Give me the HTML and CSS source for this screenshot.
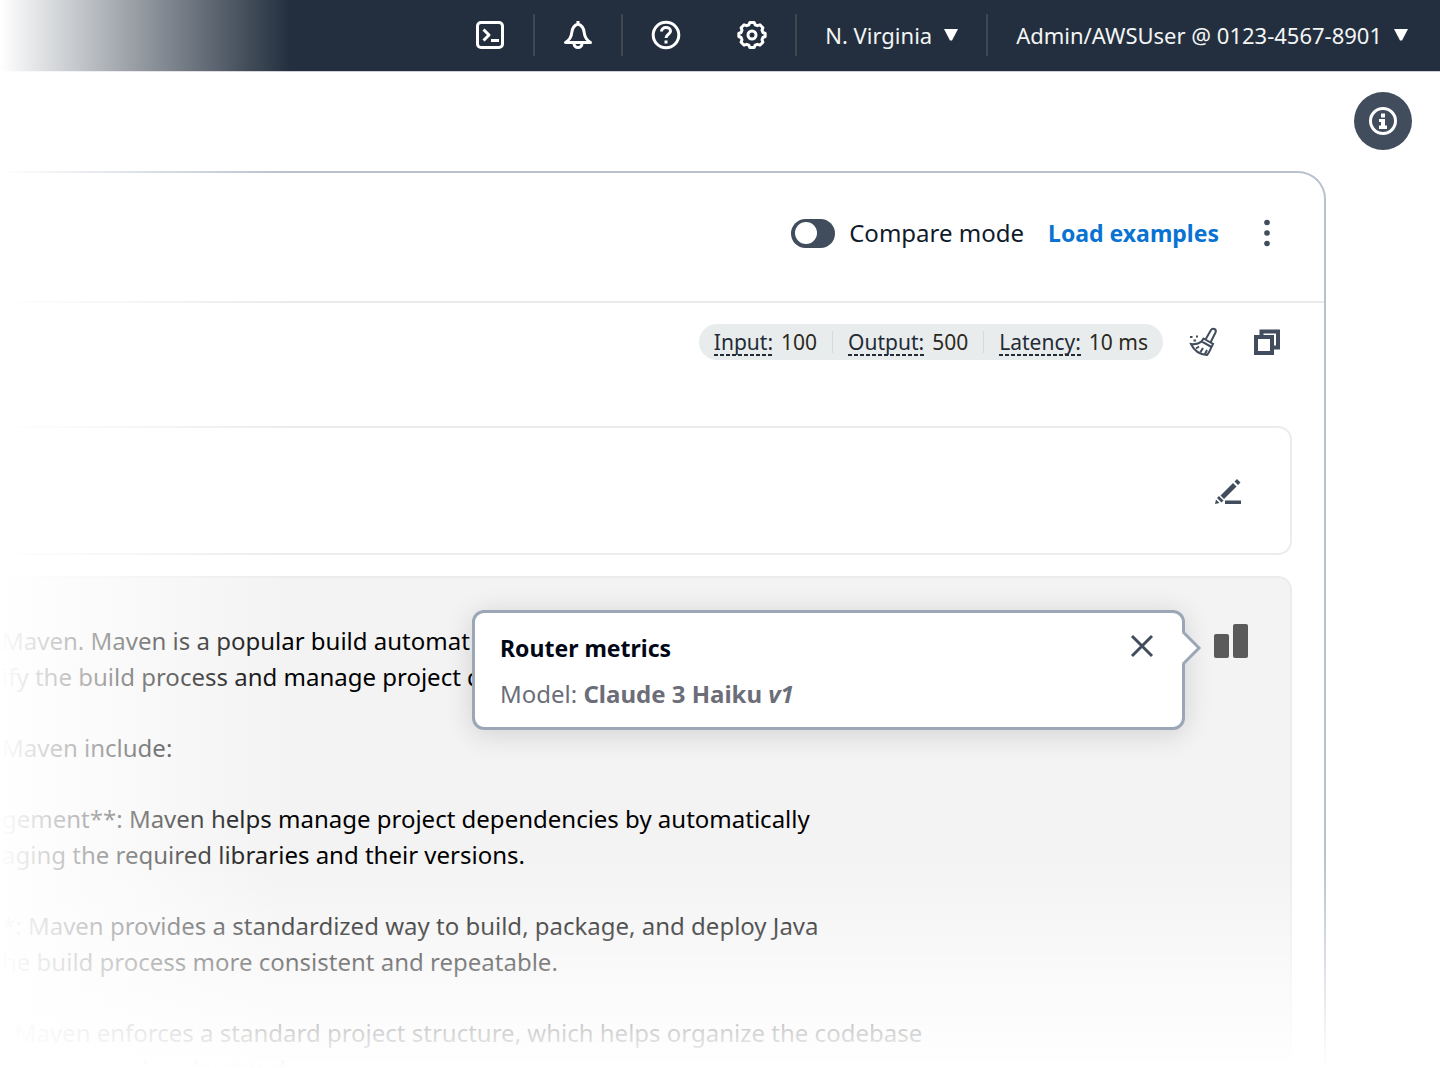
FILE: index.html
```html
<!DOCTYPE html>
<html lang="en">
<head>
<meta charset="utf-8">
<meta name="viewport" content="width=device-width, initial-scale=1">
<title>Router metrics</title>
<link rel="stylesheet" href="styles.css">
</head>
<body>
<div class="page">
  <header class="topbar">
    <nav class="topnav" aria-label="Account">
      <button class="nav-item" type="button" aria-label="CloudShell">
        <svg class="nav-icon" viewBox="0 0 30 30"><rect x="2.5" y="2.5" width="25" height="25" rx="3.5"/><path d="M8.500 9.500L14 15l-5.500 5.500M16 20.500h8"/></svg>
      </button>
      <button class="nav-item" type="button" aria-label="Notifications">
        <svg class="nav-icon" viewBox="0 0 30 30"><path d="M15 1v3M15 4c-4.500 1.500-6 5-6.300 9-.3 4-2.500 7-6.200 9.500h25c-3.700-2.500-5.900-5.500-6.200-9.500-.3-4-1.800-7.500-6.300-9zM11 23.500a4 4 0 0 0 8 0"/></svg>
      </button>
      <div class="nav-pair">
        <button class="nav-plain" type="button" aria-label="Help">
          <svg class="nav-icon" viewBox="0 0 30 30"><circle cx="15" cy="15" r="12.800"/><path d="M10.500 11.500c0-2.500 2-4 4.500-4s4.500 1.500 4.500 3.800c0 2.900-4.500 3.200-4.500 6.700M15 20.500v3"/></svg>
        </button>
        <button class="nav-plain" type="button" aria-label="Settings">
          <svg class="nav-icon" viewBox="0 0 30 30"><path d="M12.800 2.500h4.400l1 2.300 2.200.9 2.500-.9 3 3-.9 2.500.9 2.200 2.300 1v3l-2.300 1-.9 2.200.9 2.500-3 3-2.500-.9-2.200.9-1 2.300h-4.400l-1-2.300-2.200-.9-2.500.9-3-3 .9-2.500-.9-2.200-2.300-1v-3l2.300-1 .9-2.200-.9-2.500 3-3 2.500.9 2.200-.9z"/><circle cx="15" cy="15" r="4"/></svg>
        </button>
      </div>
      <button class="nav-item" type="button">N. Virginia <svg class="caret" viewBox="0 0 14 12"><path d="M0 0h14L8 11.500H6z"/></svg></button>
      <button class="nav-item" type="button">Admin/AWSUser @ 0123-4567-8901 <svg class="caret" viewBox="0 0 14 12"><path d="M0 0h14L8 11.500H6z"/></svg></button>
    </nav>
  </header>

  <div class="workspace">
    <main class="card">
      <div class="toolbar">
        <label class="toggle"><input type="checkbox"> Compare mode</label>
        <a class="load-link" href="#">Load examples</a>
        <button class="icon-button" type="button" aria-label="More actions">
          <svg viewBox="0 0 32 32"><circle cx="16" cy="5.500" r="2.800"/><circle cx="16" cy="16" r="2.800"/><circle cx="16" cy="26.500" r="2.800"/></svg>
        </button>
      </div>

      <div class="stats-row">
        <dl class="stats">
          <div class="stat"><dt>Input:</dt><dd>100</dd></div>
          <div class="stat"><dt>Output:</dt><dd>500</dd></div>
          <div class="stat"><dt>Latency:</dt><dd>10 ms</dd></div>
        </dl>
        <button class="icon-button" type="button" aria-label="Clear">
          <svg class="line-icon" viewBox="0 0 32 32"><path d="M18.500 13.500l5.500-9.500c1.500-2.500 6-1 4.500 2.500l-5 10M16.500 12.500l9.500 5.500-1.500 3-10-5.500zM14.500 15.500c-3 2.500-6.500 3-10.500 2.500 3 6.500 9 10.500 16 11 2.500-2.500 3-5 4.500-8M9 22.500l3-2M13.500 26l2.500-4M18 28l2-4"/><path d="M3 11h2.500M6.500 14.500h2.500M9 10.500h2"/></svg>
        </button>
        <button class="icon-button" type="button" aria-label="Copy">
          <svg class="line-icon copy" viewBox="0 0 32 32"><path d="M10.500 9.500v-4h16.500v16h-5"/><rect x="5" y="11" width="16" height="16"/></svg>
        </button>
      </div>

      <section class="prompt" aria-label="Prompt">
        <button class="icon-button" type="button" aria-label="Edit">
          <svg viewBox="0 0 32 32"><path d="M4 24.500l3.500 3.500L3 29zM8.500 20.500L21 8l3.500 3.500L12 24zM22.500 6.500L25 4l3.500 3.500L26 10zM5 23l2-2 4.500 4.500-2 2zM13 25.500h16V29H13z"/></svg>
        </button>
      </section>

      <section class="response" aria-label="Response">
        <div class="response-text">
          <p>Maven. Maven is a popular build automat<br>ify the build process and manage project d</p>
          <p>Maven include:</p>
          <p>gement**: Maven helps manage project dependencies by automatically<br>aging the required libraries and their versions.</p>
          <p>*: Maven provides a standardized way to build, package, and deploy Java<br>he build process more consistent and repeatable.</p>
          <p>: Maven enforces a standard project structure, which helps organize the codebase<br>navigate and understand</p>
        </div>
        <div class="metrics">
          <button class="metrics-button" type="button" aria-label="Router metrics">
            <svg viewBox="0 0 36 36"><rect x="1" y="11" width="15" height="24" rx="2"/><rect x="20" y="1" width="15" height="34" rx="2"/></svg>
          </button>
          <div class="popover" role="dialog" aria-labelledby="popover-title">
            <svg class="popover-arrow" viewBox="0 0 20 36"><path class="arrow-fill" d="M0 2L16 18 0 34z"/><path class="arrow-line" d="M1 2l16 16L1 34"/></svg>
            <div class="popover-head">
              <h2 id="popover-title">Router metrics</h2>
              <button class="icon-button" type="button" aria-label="Close">
                <svg class="line-icon close" viewBox="0 0 32 32"><path d="M6 6l20 20M26 6L6 26"/></svg>
              </button>
            </div>
            <p class="model">Model: <strong>Claude 3 Haiku <em>v1</em></strong></p>
          </div>
        </div>
      </section>
    </main>

    <aside class="rail">
      <button class="info" type="button" aria-label="Info">
        <svg viewBox="0 0 30 30"><circle cx="15" cy="15" r="12.500"/><path class="solid" d="M13 7.500h4v4h-4zM11 13h6v6.500h2V23h-8v-3.500h2V16h-2z"/></svg>
      </button>
    </aside>
  </div>
</div>
</body>
</html>
```
FILE: styles.css
```css
* { box-sizing: border-box; }

body {
  margin: 0;
  background: #fff;
  color: #0f1b2a;
  font-family: "Noto Sans", "Open Sans", sans-serif;
  font-size: 24px;
  line-height: 36px;
}

button {
  margin: 0;
  padding: 0;
  border: 0;
  background: none;
  color: inherit;
  font: inherit;
  cursor: pointer;
}

svg { display: block; }

.page {
  position: relative;
  display: flex;
  flex-direction: column;
  height: 100vh;
  overflow: hidden;
}

/* The view dissolves into white at its left and bottom edges. */
.page::before,
.page::after {
  content: "";
  position: absolute;
  left: 0;
  bottom: 0;
  z-index: 2;
  pointer-events: none;
}
.page::before {
  top: 0;
  width: 290px;
  background: linear-gradient(to right, #fff, rgba(255, 255, 255, 0));
}
.page::after {
  right: 0;
  height: 208px;
  background: linear-gradient(to top, #fff, rgba(255, 255, 255, 0));
}

.topbar {
  flex: none;
  height: 72px;
  padding: 0 32px;
  border-bottom: 1px solid #d0ced6;
  background: #232f3e;
  color: #f4f5f5;
  font-size: 22px;
}
.topnav {
  display: flex;
  justify-content: flex-end;
  align-items: center;
  height: 70px;
}
.nav-item,
.nav-pair {
  display: flex;
  align-items: center;
  height: 42px;
  padding: 0 28px;
  border-right: 2px solid #414750;
}
.nav-item { gap: 12px; white-space: nowrap; }
.nav-pair { gap: 56px; }
.nav-item:last-child { padding-right: 0; border-right: 0; }
.nav-icon {
  width: 30px;
  height: 30px;
  fill: none;
  stroke: #fff;
  stroke-width: 3;
  stroke-linejoin: round;
}
.caret { width: 14px; height: 12px; fill: #fff; }

.workspace { display: flex; flex: 1; min-height: 0; }

.card {
  flex: 1;
  min-width: 0;
  margin-top: 99px;
  border: solid #b9c1cf;
  border-width: 2px 2px 0 0;
  border-radius: 0 28px 0 0;
}

.rail { flex: none; width: 114px; padding: 20px 28px; }
.info {
  display: grid;
  place-items: center;
  width: 58px;
  height: 58px;
  border-radius: 50%;
  background: #414d5c;
}
.info svg { width: 30px; height: 30px; fill: none; stroke: #fff; stroke-width: 3; }
.info .solid { fill: #fff; stroke: none; }

.icon-button { flex: none; width: 32px; height: 32px; color: #414d5c; }
.icon-button svg { width: 32px; height: 32px; fill: currentColor; }
.icon-button .line-icon { fill: none; stroke: currentColor; stroke-width: 2; }
.icon-button .copy { stroke-width: 4; }
.icon-button .close { stroke-width: 3; }

.toolbar {
  display: flex;
  justify-content: flex-end;
  align-items: center;
  gap: 24px;
  padding: 42px 41px 50px 0;
  border-bottom: 2px solid #ebebee;
}
.toggle { display: flex; align-items: center; gap: 14px; }
.toggle input {
  appearance: none;
  display: flex;
  align-items: center;
  width: 44px;
  height: 29px;
  margin: 0;
  padding: 0 4px;
  border-radius: 15px;
  background: #414d5c;
}
.toggle input::before {
  content: "";
  width: 22px;
  height: 22px;
  border-radius: 50%;
  background: #fff;
}
.toggle input:checked { justify-content: flex-end; }
.load-link { color: #0972d3; font-size: 23px; font-weight: 700; text-decoration: none; }
.toolbar .icon-button { margin-left: 8px; }

.stats-row {
  display: flex;
  justify-content: flex-end;
  align-items: center;
  gap: 32px;
  padding: 21px 41px 66px 0;
}
.stats {
  display: flex;
  align-items: center;
  margin: 0 -8px 0 0;
  height: 36px;
  border-radius: 18px;
  background: #e9ecec;
  font-size: 21px;
  line-height: 28px;
}
.stat { display: flex; gap: 8px; padding: 0 15px; }
.stat + .stat {
  padding-left: 16px;
  background: linear-gradient(#d5dbdb, #d5dbdb) left center / 1px 22px no-repeat;
}
.stat dt {
  color: #232b37;
  background: repeating-linear-gradient(to right, #232b37 0 4px, transparent 4px 6px) left bottom / 100% 2px no-repeat;
}
.stat dd { margin: 0; color: #2b291c; }

.prompt,
.response {
  margin-right: 32px;
  border: solid #ebeced;
  border-width: 2px 2px 2px 0;
  border-radius: 0 14px 14px 0;
}
.prompt {
  display: flex;
  justify-content: flex-end;
  padding: 47px 46px 46px 0;
}

.response {
  display: flex;
  justify-content: space-between;
  margin-top: 21px;
  padding: 45px 41px 45px 2px;
  background: #f3f3f3;
  color: #000;
}
.response-text { white-space: nowrap; }
.response-text p { margin: 0 0 35px; }

.metrics { position: relative; flex: none; }
.metrics-button { width: 36px; height: 36px; }
.metrics-button svg { width: 36px; height: 36px; fill: #5a5a5a; }

.popover {
  position: absolute;
  top: -13px;
  right: 64px;
  width: 713px;
  padding: 17px 24px 15px 25px;
  border: 3px solid #9ba7b6;
  border-radius: 12px;
  background: #fff;
  box-shadow: 0 4px 28px rgba(0, 7, 22, 0.14);
}
.popover-arrow {
  position: absolute;
  top: 17px;
  right: -20px;
  width: 20px;
  height: 36px;
}
.arrow-fill { fill: #fff; }
.arrow-line { fill: none; stroke: #9ba7b6; stroke-width: 3; }
.popover-head { display: flex; justify-content: space-between; align-items: flex-start; }
.popover-head h2 { margin: 0; color: #000716; font-size: 23px; line-height: 36px; }
.model { margin: 10px 0 0; color: #6b6e78; }
```
